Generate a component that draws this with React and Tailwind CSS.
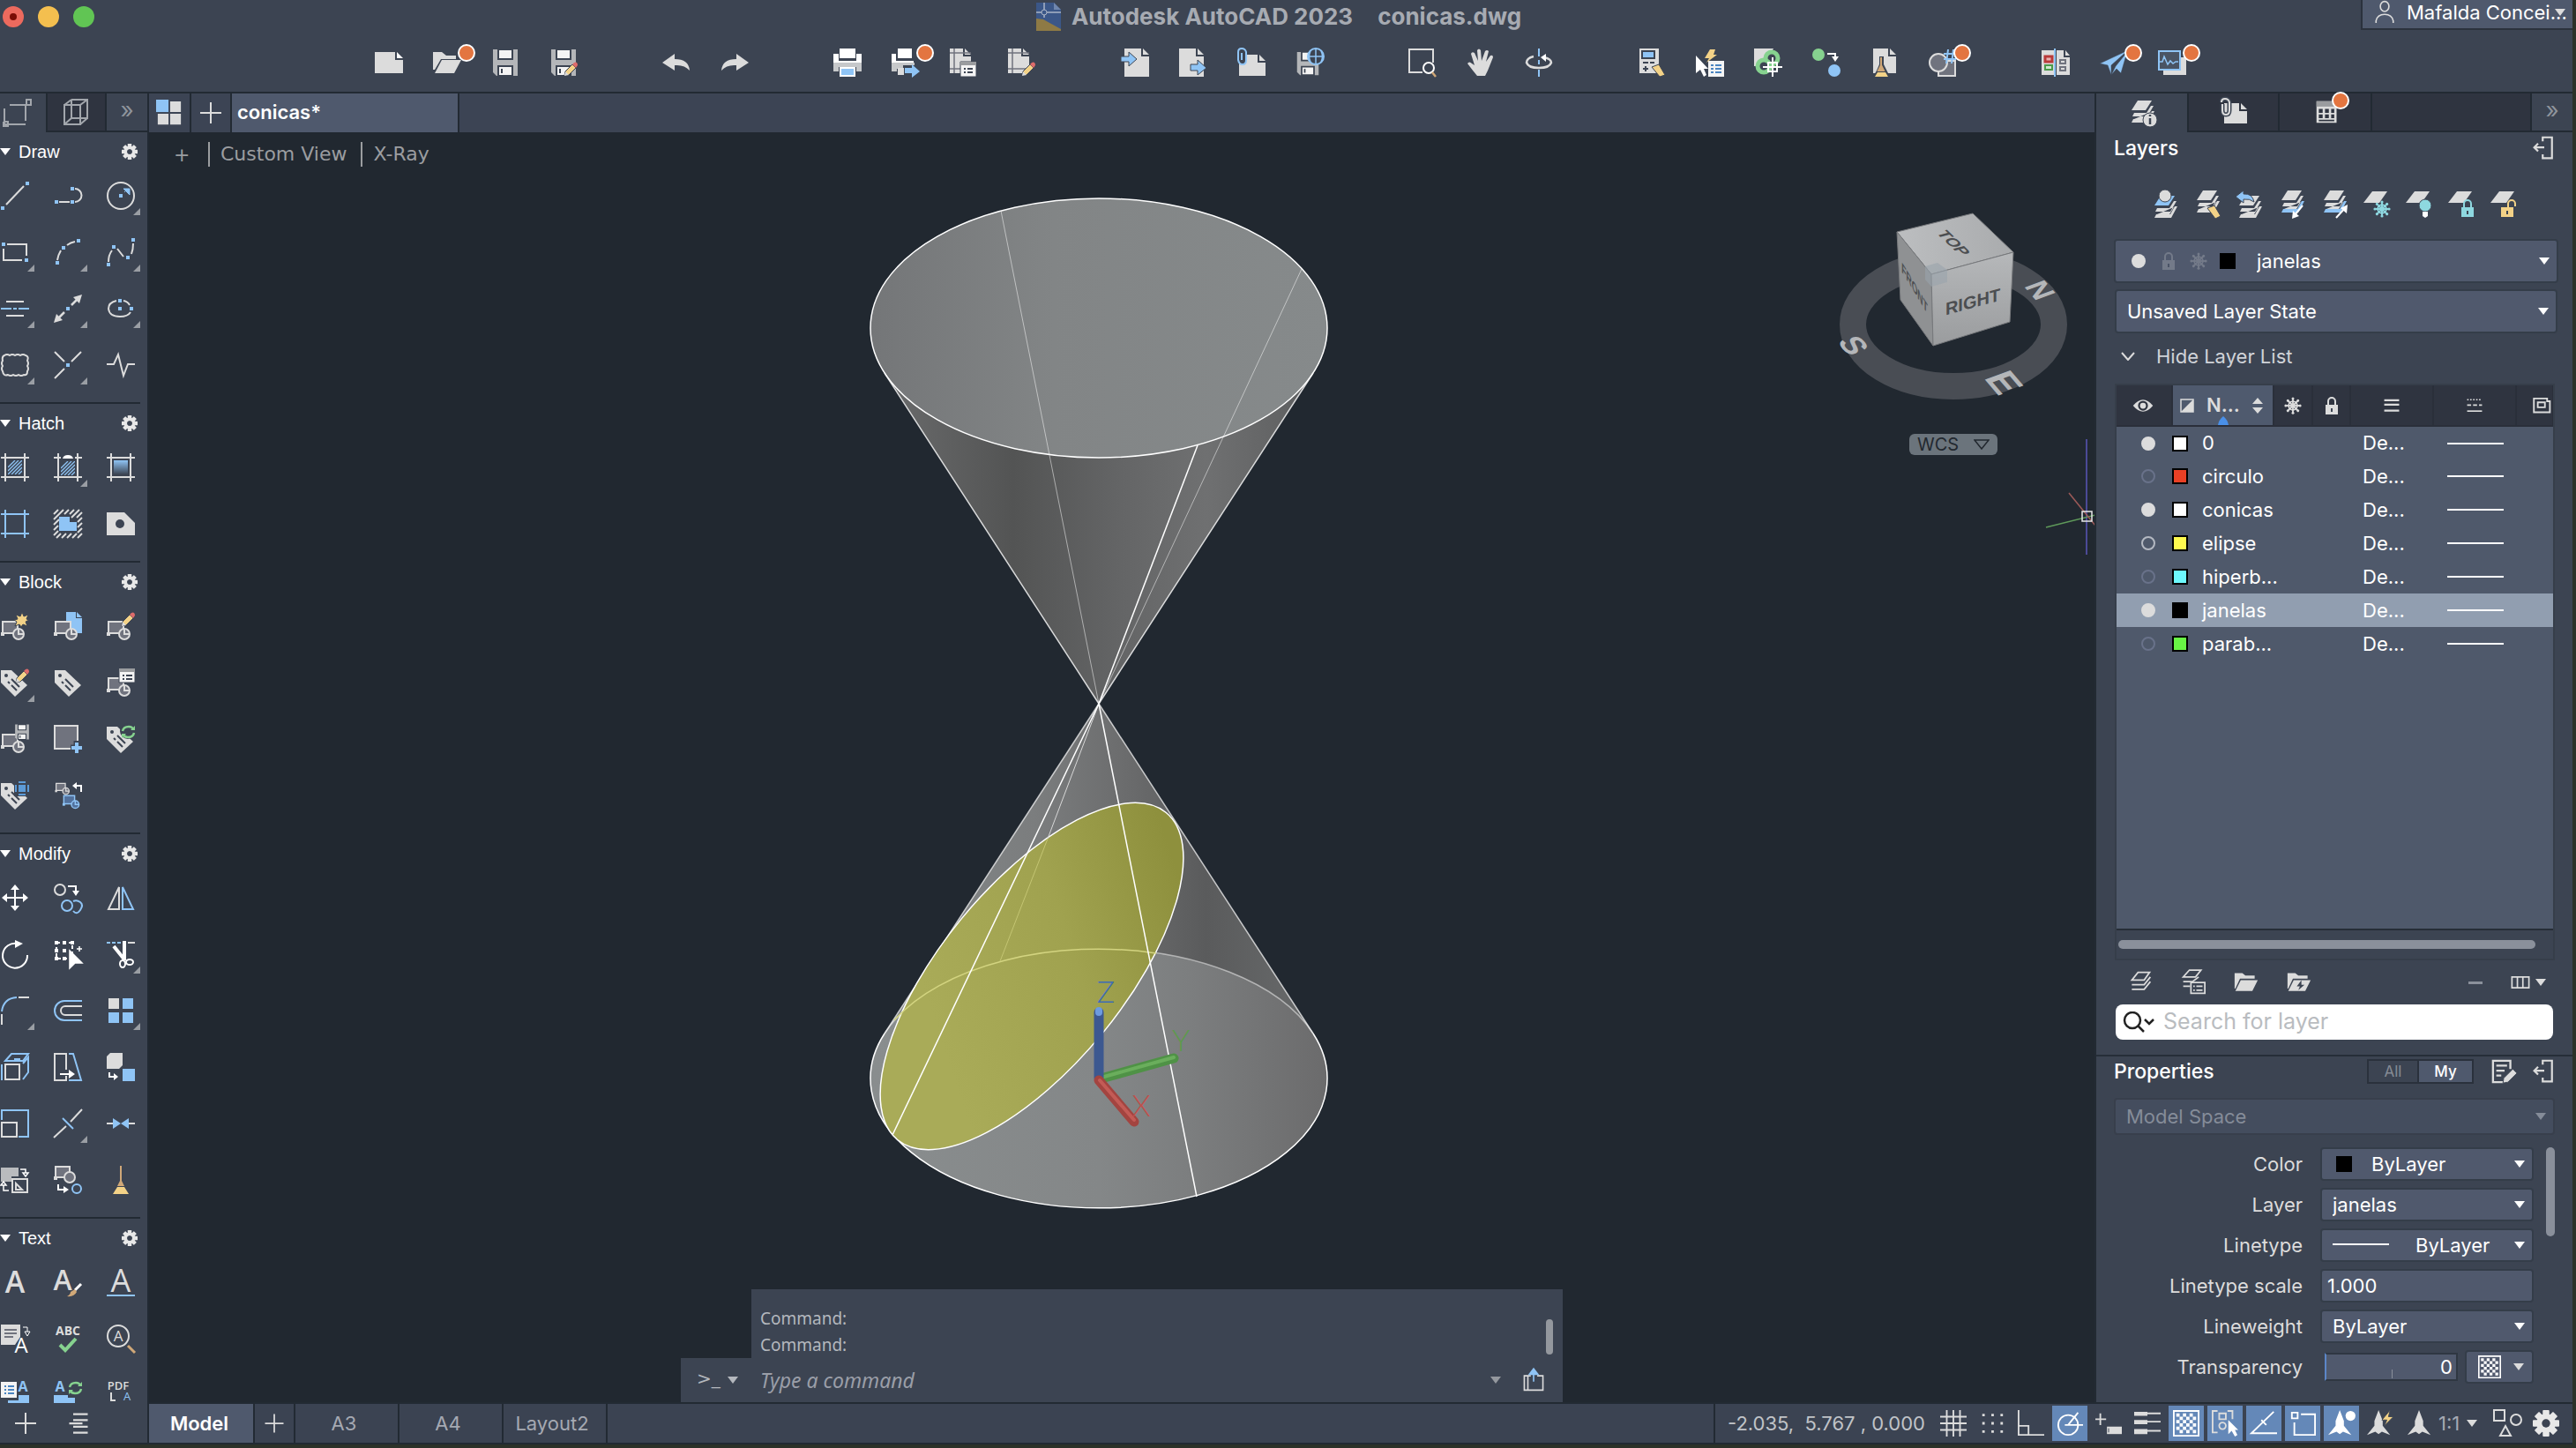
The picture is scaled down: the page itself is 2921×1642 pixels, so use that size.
import clsx from "clsx";

const W = "#dcdcdc";
const B = "#8fc4f5";
const Y = "#f3d287";
const G = "#86d28f";
const C = "#8ed8e0";
const K = "#3c4452";
const M = "#70737e";

/* ---------- shared icon parts ---------- */

const Dot = ({ x, y }) => <rect x={x - 2} y={y - 2} width="4" height="4" fill={B} />;

const Pencil = ({ x = 0, y = 0 }) => (
  <g transform={`translate(${x} ${y})`}>
    <path d="M1 16l1-5 8-8 4 4-8 8z" fill={Y} stroke={K} />
    <path d="M10 3l2-2q2-1 3 0t1 3l-2 3z" fill="#dd6b6b" />
    <path d="M1 16l1-5 4 4z" fill={W} />
  </g>
);

const BlockShape = ({ color = W, fill = M }) => (
  <g fill={fill} stroke={color} strokeWidth="2">
    <path d="M2 11h17v13H2z" />
    <circle cx="20" cy="25" r="6" />
    <path d="M20 19v6h6" fill="none" />
    <path d="M0 23h4v4H0z" fill={color} stroke="none" />
  </g>
);

const TagShape = () => (
  <>
    <path d="M0 2h12l18 17-14 13L0 16z" fill={W} />
    <circle cx="6" cy="8" r="2" fill={K} />
    <path d="M8 15l2 2M12 12l9 9M12 19l6 6" stroke={K} strokeWidth="2" />
  </>
);

const Page = ({ x = 6, y = 2, w = 22, h = 28 }) => (
  <path d={`M${x} ${y}h${w - 9}v9h9v${h - 9}h${-w}zM${x + w - 7} ${y}l7 7h-7z`} fill={W} />
);

const Floppy = () => (
  <>
    <path d="M2 1h28v30H6l-4-4z" fill="#b4b6b9" />
    <path d="M8 1h16v11H8zM8 20h16v11H8z" fill="#f4f4f4" stroke={K} strokeWidth="2" />
    <path d="M12 23v5" stroke={K} strokeWidth="2" />
  </>
);

const Frame = ({ color = W }) => (
  <path d="M0 5h32M0 27h32M5 0v32M27 0v32" stroke={color} strokeWidth="2" />
);

const Stack = ({ top = W, bottom = W, y = 0 }) => (
  <g transform={`translate(0 ${y})`}>
    <path d="M11 0h16l-7 11H4z" fill={top} />
    <path d="M26 6l-5 8H7l-2 4h17l7-12zM26 13l-5 8H7" fill={W} />
    <path d="M27 12l-5 9H6l-2 4h19l7-13z" fill={bottom} />
  </g>
);

const Sheet = () => <path d="M11 1h17l-9 13H1z" fill={W} />;

const Snow = ({ x = 16, y = 16, r = 9, color = C, width = 2 }) => (
  <g transform={`translate(${x} ${y})`} stroke={color} strokeWidth={width} fill="none">
    {[0, 45, 90, 135].map((a) => (
      <path key={a} d={`M0 ${-r}V${r}`} transform={`rotate(${a})`} />
    ))}
    <circle r={r * 0.6} />
    {[0, 45, 90, 135, 180, 225, 270, 315].map((a) => (
      <circle key={a} cy={-r} r={width * 0.8} fill={color} stroke="none" transform={`rotate(${a})`} />
    ))}
  </g>
);

const Lock = ({ x = 9, y = 4, color = W, open = false }) => (
  <g transform={`translate(${x} ${y})`}>
    <path d={open ? "M8 9V5a4 4 0 0 1 8 0v3" : "M3 9V5a4 4 0 0 1 8 0v4"} fill="none" stroke={color} strokeWidth="2" />
    <path d="M0 9h14v11H0z" fill={color} />
    <path d="M7 13v4" stroke={K} strokeWidth="2" />
  </g>
);

const Hash = () => <path d="M12 0L0 12M18 0L0 18M24 0L0 24M24 6L6 24M24 12L12 24M24 18l-6 6" stroke={B} strokeWidth="2" />;

const Refresh = ({ x = 15, y = 0 }) => (
  <g transform={`translate(${x} ${y})`} fill="none" stroke={G} strokeWidth="2.5">
    <path d="M2 7q1-5 7-5 4 0 5 3M15 9q-1 5-7 5-4 0-5-3" />
    <path d="M11 6h5V1zM6 10H1v5z" fill={G} stroke="none" />
  </g>
);

const ICONS = {
  /* draw */
  line: <><path d="M6 26L26 5" stroke={W} strokeWidth="2" /><Dot x={2} y={30} /><Dot x={30} y={2} /></>,
  polyline: <><path d="M6 23h12M24 8a7.500 7.500 0 0 1 0 15" stroke={W} strokeWidth="2" fill="none" /><Dot x={3} y={23} /><Dot x={21} y={23} /><Dot x={21} y={8} /></>,
  circle: <><circle cx="16" cy="16" r="15" stroke={W} strokeWidth="2" fill="none" /><Dot x={16} y={16} /><path d="M20 12l3-3M19 8h7v7z" stroke={B} fill={B} /></>,
  rect: <><path d="M7 7h22v13M24 25H3V12" stroke={W} strokeWidth="2" fill="none" /><Dot x={3} y={7} /><Dot x={29} y={25} /></>,
  arc: <><path d="M4 25q1-6 4-11M15 8q4-3 9-4" stroke={W} strokeWidth="2" fill="none" /><Dot x={4} y={28} /><Dot x={11} y={11} /><Dot x={28} y={3} /></>,
  spline: <><path d="M2 27q0-8 4-13M12 12l7 9M28 18q2-5 2-12" stroke={W} strokeWidth="2" fill="none" /><Dot x={2} y={30} /><Dot x={8} y={10} /><Dot x={24} y={22} /><Dot x={30} y={2} /></>,
  centerline: <><path d="M6 8h20M6 24h20" stroke={W} strokeWidth="2" /><path d="M0 16h12M14 16h4M20 16h12" stroke={B} strokeWidth="2" /></>,
  ray: <><path d="M20 12l7-7M12 20l-7 7" stroke={W} strokeWidth="2.500" /><path d="M32 0l-3 10-7-7zM0 32l3-10 7 7z" fill={W} /><Dot x={16} y={16} /></>,
  ellipse: <><path d="M11 7Q2 9 2 16q1 9 13 9 9 0 12-5M19 7q5 1 7 5" stroke={W} strokeWidth="2" fill="none" /><Dot x={15} y={7} /><Dot x={15} y={16} /><Dot x={28} y={16} /></>,
  cloud: <path d="M4 5q3-2 6 0 3-2 6 0 3-2 6 0 3-2 6 0 4 1 2 6 2 3 0 6 2 3 0 6 0 5-4 4-3 2-6 0-3 2-6 0-3 2-6 0-5 2-6-4-2-3 0-6-2-3 0-6-1-5 2-6z" stroke={W} strokeWidth="2" fill="none" />,
  cross: <><path d="M1 1l11 11M31 1L20 12M12 20L1 31" stroke={W} strokeWidth="2" /><Dot x={16} y={16} /></>,
  zigzag: <path d="M0 15h8l5-11 6 24 5-13h8" stroke={W} strokeWidth="2" fill="none" />,
  /* hatch */
  hatch: <><Frame /><svg x="8" y="8" width="16" height="16" viewBox="0 0 24 24"><Hash /></svg></>,
  hatchEdit: <><Frame /><svg x="8" y="9" width="16" height="16" viewBox="0 0 24 24"><Hash /></svg><path d="M8 3h16v4H8z" fill={K} /><path d="M10 6q1-4 6-4t6 4z" fill="#fff" /></>,
  gradient: <><defs><linearGradient id="hg" x2="0" y2="1"><stop stopColor={B} /><stop offset="1" stopColor={K} /></linearGradient></defs><Frame /><path d="M8 8h16v16H8z" fill="url(#hg)" /></>,
  boundary: <Frame color={B} />,
  region: <><path d="M0 5l5-5M0 11L11 0M0 17l6-6M0 23l5-5M0 29l5-5M3 32l5-5M9 32l5-5M15 32l5-5M21 32l5-5M27 32l5-5M12 5l5-5M18 5l5-5M20 9l9-9M26 9l6-6M27 14l5-5M27 20l5-5M27 26l5-5" stroke={W} strokeWidth="2" /><path d="M6 8h12v6h8v10H6z" fill={B} /></>,
  wipeout: <><path d="M0 3h20l12 12v14H0z" fill={W} /><circle cx="15" cy="16" r="5" fill={K} /></>,
  /* block */
  blockNew: <><BlockShape /><path d="M24 0l2 5 5-2-2 5 3 1-4 2 2 5-5-2-2 3-2-3-5 2 2-5-3-2 4-1-2-5 5 2z" fill={Y} stroke={K} /></>,
  blockInsert: <><path d="M14 0h11v7h7v17H14z" fill={B} /><path d="M26 0l6 6h-6z" fill={B} /><BlockShape /></>,
  blockEdit: <><BlockShape /><Pencil x={16} y={0} /></>,
  tagEdit: <><TagShape /><Pencil x={16} y={0} /></>,
  tag: <g transform="translate(1 0)"><TagShape /></g>,
  blockList: <><BlockShape /><path d="M14 0h18v16H14z" fill="#f4f4f4" stroke={K} /><path d="M14 0h18v4H14z" fill="#9a9c9f" /><path d="M18 8h2M22 8h7M18 12h2M22 12h7" stroke={K} strokeWidth="2" /></>,
  blockSave: <><BlockShape /><svg x="15" y="-1" width="18" height="18" viewBox="0 0 32 32"><Floppy /></svg></>,
  baseAdd: <><path d="M1 1h26v26H1z" fill={M} stroke={W} strokeWidth="2" /><path d="M26 18v14M19 26h14" stroke={K} strokeWidth="7" /><path d="M26 20v12M20 26h12" stroke={B} strokeWidth="4" /></>,
  tagSync: <><TagShape /><circle cx="24" cy="7" r="9" fill={K} /><Refresh x={16} y={0} /></>,
  tagField: <><TagShape /><path d="M15 0h17v17H15z" fill={K} /><path d="M20 4h8v8h-8zM20 0h8v2h-8zM20 14h8v2h-8zM16 4h2v8h-2zM30 4h2v8h-2z" fill="#5c9bd8" /></>,
  blockReplace: <><svg width="20" height="16" viewBox="0 7 28 26"><BlockShape /></svg><svg x="8" y="14" width="24" height="18" viewBox="0 8 28 25"><BlockShape color={B} fill="#52719c" /></svg><path d="M31 12V5h-7" stroke="#fff" strokeWidth="2" fill="none" /><path d="M26 1v8l-5-4z" fill="#fff" /></>,
  /* modify */
  move: <><path d="M16 5v22M5 16h22" stroke="#fff" strokeWidth="2" /><path d="M16 1l5 6H11zM16 31l5-6H11zM1 16l6-5v10zM31 16l-6-5v10z" fill="#fff" /></>,
  copy: <><circle cx="7" cy="7" r="6" stroke={W} strokeWidth="2" fill="none" /><path d="M16 3h9v6" stroke="#fff" strokeWidth="2" fill="none" /><path d="M21 8h8l-4 6z" fill="#fff" /><g stroke={B} strokeWidth="2" fill="none"><circle cx="15" cy="25" r="6" /><path d="M22 20q4-2 8 1t0 9-8 1" /></g></>,
  mirror: <><path d="M14 4v25H2z" stroke={W} strokeWidth="2" fill="none" /><path d="M18 4v25h12z" stroke={B} strokeWidth="2" fill="none" /></>,
  rotate: <><path d="M19 4A14 14 0 1 0 30 17" stroke="#fff" strokeWidth="2" fill="none" /><path d="M16 0l9 4-9 5z" fill="#fff" /></>,
  stretch: <><path d="M3 3h18v18H3z" stroke="#fff" strokeWidth="2" strokeDasharray="4 3" fill="none" /><path d="M1 1h4v4H1zM10 1h4v4h-4zM19 1h4v4h-4zM1 10h4v4H1zM1 19h4v4H1zM10 10h4v4h-4zM10 19h4v4h-4z" fill="#fff" /><path d="M18 12v20l6-6h8zM26 10h6M29 7v6" fill="#fff" stroke="#fff" strokeWidth="1.500" /></>,
  trim: <><path d="M0 3h4M6 3h4M12 3h4" stroke={B} strokeWidth="2" /><path d="M24 3h8" stroke={W} strokeWidth="2" /><path d="M8 7l12 15M20 1v22" stroke="#fff" strokeWidth="4" /><g stroke="#fff" strokeWidth="2" fill="none"><ellipse cx="18" cy="27" rx="3" ry="4" /><ellipse cx="26" cy="25" rx="4" ry="3" /></g></>,
  fillet: <><path d="M1 17Q3 2 18 1" stroke={B} strokeWidth="2" fill="none" /><path d="M20 1h12M1 20v12" stroke={W} strokeWidth="2" /></>,
  offset: <><path d="M32 5H12a11 11 0 0 0 0 22h20" stroke={B} strokeWidth="2" fill="none" /><path d="M32 11H13a5 5 0 0 0 0 10h19" stroke={W} strokeWidth="2" fill="none" /></>,
  array: <><path d="M2 2h12v12H2z" fill={W} /><path d="M18 2h12v12H18zM18 18h12v12H18zM2 18h12v12H2z" fill={B} /></>,
  extrude: <><path d="M5 13h16v17H5z" stroke={W} strokeWidth="2" fill="none" /><path d="M1 31V13M5 9l7-8h19l-6 8zM15 7h7M25 12l6-7v17l-6 8" stroke={B} strokeWidth="2" fill="none" /></>,
  taper: <><path d="M14 19V1H1v30h13v-5" stroke={W} strokeWidth="2" fill="none" /><path d="M17 1h5l9 30H17" stroke={B} strokeWidth="2" fill="none" /><path d="M7 23h10v-4l7 5-7 5v-4H7z" fill="#fff" /></>,
  flatten: <><path d="M0 4l4-4h14v14l-4 4H0z" fill={W} /><path d="M3 22v5h5" stroke="#fff" strokeWidth="2" fill="none" /><path d="M8 23l5 4-5 4z" fill="#fff" /><path d="M18 18h14v14H18z" fill={B} /></>,
  scale: <><path d="M1 12V1h30v30H20" stroke={B} strokeWidth="2" fill="none" /><path d="M1 15h17v16H1z" stroke={W} strokeWidth="2" fill="none" /></>,
  breakAt: <><path d="M32 0L19 14M14 19L0 32" stroke={W} strokeWidth="2" /><path d="M10 10l12 12" stroke={B} strokeWidth="2" /></>,
  join: <><path d="M0 16h8M24 16h8" stroke={W} strokeWidth="2" /><path d="M7 10l9 6-9 6zM25 10l-9 6 9 6z" fill={B} /></>,
  swap: <><path d="M0 2h20v10h-8v6H0z" fill="#b9bbbe" /><path d="M13 15h17v15H13zM17 20v7h7z" stroke={W} strokeWidth="2" fill="none" /><path d="M22 4h6v4M25 8h6l-3 4zM3 22v6h6M0 22h6l-3-4z" stroke="#fff" strokeWidth="1.500" fill="none" /></>,
  changeSpace: <><path d="M2 1h16v12H2z" fill={M} stroke={W} strokeWidth="2" /><circle cx="18" cy="13" r="6" fill={M} stroke={W} strokeWidth="2" /><path d="M0 12h4v4H0z" fill={W} /><path d="M5 21v6h6" stroke="#fff" strokeWidth="2" fill="none" /><path d="M11 23l6 4-6 4z" fill="#fff" /><circle cx="26" cy="26" r="5" stroke={B} strokeWidth="2" fill="none" /></>,
  purge: <><path d="M16 0v17" stroke="#d0a878" strokeWidth="2" /><path d="M15 17h2l3 6h-8z" fill="#d0a878" /><path d="M12 24h8l5 8H7z" fill={Y} /></>,
  /* text */
  mtext: <text x="16" y="28" textAnchor="middle" className="font-['Open_Sans'] text-[34px] font-semibold" fill={W}>A</text>,
  textStyle: <><text x="10" y="25" textAnchor="middle" className="font-['Open_Sans'] text-[32px] font-semibold" fill={W}>A</text><path d="M31 18l-7 7" stroke="#fff" strokeWidth="3" /><path d="M24 24l2 3q-3 6-11 5 4-2 4-5z" fill="#d0a878" /></>,
  textSingle: <><text x="16" y="27" textAnchor="middle" className="font-['Open_Sans'] text-[36px]" fill={W}>A</text><path d="M0 31h32" stroke={B} strokeWidth="2" /></>,
  textConvert: <><path d="M0 0h22v14l-6 9H0z" fill={W} /><path d="M4 6h14M4 10h14M4 14h10" stroke={M} strokeWidth="2" /><text x="23" y="32" textAnchor="middle" className="font-['Open_Sans'] text-[24px]" fill="#fff">A</text><path d="M25 3h5v5M27 8h6l-3 5z" stroke="#fff" fill="none" /></>,
  spell: <><text x="16" y="12" textAnchor="middle" className="font-['Open_Sans'] text-[14px] font-bold" fill={W}>ABC</text><path d="M7 23l6 6 12-13" stroke={G} strokeWidth="4" fill="none" /></>,
  textFind: <><circle cx="13" cy="13" r="12" stroke={W} strokeWidth="2" fill="none" /><text x="13" y="19" textAnchor="middle" className="font-['Open_Sans'] text-[17px]" fill={W}>A</text><path d="M24 24l8 8" stroke="#d0a878" strokeWidth="3" /></>,
  textField: <><path d="M0 1h18v18H0z" fill="#f4f4f4" /><path d="M4 6h2M8 6h7M4 10h2M8 10h7M4 14h2M8 14h7" stroke="#4a84c0" strokeWidth="2" /><text x="25" y="12" textAnchor="middle" className="font-['Open_Sans'] text-[16px] font-bold" fill={B}>A</text><path d="M20 16h12v9H8v-3h12z" fill={B} /></>,
  textUpdate: <><text x="7" y="12" textAnchor="middle" className="font-['Open_Sans'] text-[16px] font-bold" fill={B}>A</text><path d="M0 16h16v3h8v6H0z" fill={B} /><Refresh x={16} y={0} /></>,
  pdfText: <><text x="13" y="10" textAnchor="middle" className="font-['Open_Sans'] text-[13px] font-semibold" fill={W}>PDF</text><path d="M5 13v9h5" stroke={W} strokeWidth="2" fill="none" /><text x="23" y="22" textAnchor="middle" className="font-['Open_Sans'] text-[13px]" fill={B}>A</text></>,
  /* top bar */
  newFile: <><path d="M0 4h23v9h9v15H0z" fill={W} /><path d="M25 4l7 7h-7z" fill="#fff" /></>,
  open: <><path d="M0 4h10l5 4h11v4H9L2 24H0z" fill={W} /><path d="M10 13h22l-8 15H2z" fill={W} /></>,
  save: <Floppy />,
  saveAs: <><Floppy /><Pencil x={16} y={15} /></>,
  undo: <path d="M0 16L14 6v6q16 0 17 13-6-7-17-6v6z" fill={W} />,
  redo: <path d="M32 16L18 6v6Q2 12 1 25q6-7 17-6v6z" fill={W} />,
  print: <><path d="M0 6h6v8h20V6h6v10H0z" fill="#fff" /><path d="M7 0h18v11H7z" fill="#fff" /><path d="M0 16h32v10h-6v-5H6v5H0z" fill="#c6c8ca" /><path d="M8 22h16v9H8z" fill={B} stroke="#fff" strokeWidth="2" /></>,
  batch: <><path d="M0 6h5v8h20v2H0z" fill="#fff" /><path d="M7 0h16v11H7z" fill="#fff" /><path d="M0 16h26v3H13v4H6v3H0z" fill="#c6c8ca" /><path d="M7 22h7v8H7z" fill={W} /><path d="M15 22h8v-4l9 8-9 7v-5h-8z" fill={B} /></>,
  pageSetup: <><Page x={0} y={0} w={24} h={28} /><path d="M0 5h24M0 23h24M5 0v28" stroke={M} strokeWidth="1.500" /><path d="M12 15h18v17H12z" fill="#f4f4f4" stroke={K} /><path d="M12 15h18v4H12z" fill="#9a9c9f" /><path d="M16 23h2M20 23h6M16 27h2M20 27h6" stroke={K} strokeWidth="2" /></>,
  pageEdit: <><Page x={0} y={0} w={24} h={28} /><path d="M0 5h24M0 23h24M5 0v28" stroke={M} strokeWidth="1.500" /><Pencil x={15} y={15} /></>,
  importFile: <><Page x={4} y={0} w={28} h={32} /><path d="M0 9h9V4l9 8-9 8v-5H0z" fill={B} stroke={K} /></>,
  exportFile: <><Page x={0} y={0} w={28} h={32} /><path d="M13 18h8v-5l10 9-10 8v-5h-8z" fill={B} stroke={K} /></>,
  attach: <><Page x={2} y={7} w={30} h={24} /><path d="M1 4q0-4 4-4t5 4v9q0 5-4 5t-5-5z" fill={K} stroke={B} strokeWidth="2" /><path d="M5 5v8" stroke={B} strokeWidth="2" /></>,
  saveWeb: <><svg y="3" width="28" height="28" viewBox="0 0 32 32"><Floppy /></svg><circle cx="23" cy="9" r="9" fill={K} stroke={B} strokeWidth="2" /><path d="M14 9h18M23 0v18M17 3q-3 6 0 12M29 3q3 6 0 12" stroke={B} strokeWidth="1.500" fill="none" /></>,
  zoomWin: <><path d="M16 27H1V1h27v15" stroke={W} strokeWidth="2" fill="none" /><circle cx="23" cy="22" r="6" stroke="#fff" strokeWidth="2" fill={K} /><path d="M27 27l4 5" stroke="#d0a878" strokeWidth="2.500" /></>,
  hand: <path d="M12 31q-5-6-11-14 2-3 5 0l3 2L5 6q1-3 4-1l4 9L12 2q2-3 4 0l1 12 4-11q2-2 4 0l-3 12 5-7q3-1 3 2l-6 15-3 6z" fill={W} />,
  orbit: <><path d="M16 0v9M16 13v5M16 24v8" stroke={B} strokeWidth="2" /><path d="M10 9Q2 11 2 16q2 6 14 6t14-6q0-4-8-6" stroke={W} strokeWidth="2.500" fill="none" /><path d="M24 6v9l-6-5z" fill="#fff" /></>,
  calc: <g transform="translate(2 0)"><path d="M0 0h22v28H0z" fill={W} /><path d="M3 3h14v8H3z" fill={B} stroke={K} strokeWidth="2" /><path d="M4 16h6M12 16h5M4 23h6M7 20v6" stroke={K} strokeWidth="2" /><path d="M14 21l8-3 7 12-6 2z" fill={Y} stroke={K} /></g>,
  quickSelect: <><path d="M18 1h-6l-6 10h5L8 16l12-9h-4z" fill={Y} transform="translate(4 0)" /><path d="M0 8v20l5-4 4 8 3-2-3-7h5z" fill="#fff" /><path d="M14 14h18v18H14z" fill="#f4f4f4" /><path d="M17 19h3M22 19h7M17 23h3M22 23h7M17 27h3M22 27h7" stroke="#4a84c0" strokeWidth="2" /></>,
  countAdd: <><path d="M0 0h22L12 20H0z" fill={W} /><circle cx="20" cy="11" r="7" stroke={G} strokeWidth="5" fill={K} /><circle cx="11" cy="20" r="7" stroke={G} strokeWidth="5" fill={K} /><path d="M21 10v22M10 21h22M16 16h10v10H16z" stroke="#fff" strokeWidth="2" fill="none" /></>,
  match: <><circle cx="7" cy="7" r="7" fill={G} /><circle cx="25" cy="25" r="7" fill={B} /><path d="M17 6h9v4" stroke="#fff" strokeWidth="2" fill="none" /><path d="M22 9h8l-4 6z" fill="#fff" /></>,
  purgePage: <><Page x={3} y={0} w={26} h={28} /><path d="M10 9h5v9l4 8 3 6H3l4-7 3-7z" fill={K} /><path d="M12 10v9l3 6H9l3-6" stroke="#d0a878" strokeWidth="2" fill="#d0a878" /><path d="M8 27h9l3 5H5z" fill={Y} /></>,
  count: <><path d="M11 14h19v17H11z" fill={M} stroke={W} strokeWidth="2" /><circle cx="11" cy="16" r="10" fill={M} stroke={W} strokeWidth="2" /><path d="M17 6h14M17 12h14M22 1l-2 16M28 1l-2 16" stroke={B} strokeWidth="2" /></>,
  compare: <><path d="M0 2h14v28H0zM17 2h8v8h7v20H17zM27 2l5 6h-5z" fill={W} /><path d="M4 9h8v6H4z" fill="#e8b0b0" stroke="#b83a3a" strokeWidth="3" /><path d="M4 19h8v5H4z" fill="#cfe8cf" stroke="#4a9a4a" strokeWidth="2" /><path d="M21 13h6v4h-6zM21 21h6v4h-6z" stroke={M} strokeWidth="2" fill="none" /><path d="M15 0v32" stroke={B} strokeWidth="2" /></>,
  plane: <path d="M0 17L32 2 13 19v11l6-7 5 5L31 4 18 20 13 30 9 19z" fill={B} stroke={K} strokeWidth="0.500" />,
  monitor: <><path d="M6 10h26v20H6z" fill={W} /><path d="M1 3h24v21H1z" fill="#4a5464" stroke={B} strokeWidth="2" /><path d="M2 15h3l2-6 4 9 3-4 3 3 3-2h3" stroke={B} strokeWidth="1.500" fill="none" /></>,
  /* layers */
  layMake: <><g transform="translate(0 6)"><Stack top={B} /></g><circle cx="16" cy="6" r="7" fill={W} stroke={K} /></>,
  layMatch: <><Stack y={0} /><path d="M16 20l8-3 7 12-6 3z" fill={Y} stroke={K} /></>,
  layPrev: <><Stack y={6} /><path d="M0 7l9-7v4q10-1 12 9-5-4-12-3v4z" fill={B} stroke={K} /></>,
  layIso: <><Stack y={0} bottom={B} /><path d="M28 17L19 28" stroke="#fff" strokeWidth="2" /><path d="M16 32l1-9 7 6z" fill="#fff" /></>,
  layUniso: <><Stack y={0} bottom={B} /><path d="M18 31l10-11" stroke="#fff" strokeWidth="2" /><path d="M31 16l-1 10-7-6z" fill="#fff" /></>,
  layFreeze: <><Sheet /><Snow x={22} y={21} r={8} /></>,
  layOff: <><Sheet /><circle cx="23" cy="17" r="7" fill={C} stroke={K} /><path d="M20 24h6v5l-3 2-3-2z" fill="#fff" /></>,
  layLock: <><Sheet /><path d="M15 14h17v17H15z" fill={K} /><Lock x={16} y={10} color={C} /></>,
  layUnlock: <><Sheet /><Lock x={13} y={10} color={Y} open /></>,
  layInfo: <><Stack y={2} /><circle cx="25" cy="24" r="8" fill={W} stroke={K} /><path d="M25 22v7M25 18v2" stroke={K} strokeWidth="2.500" /></>,
  attachTab: <><Page x={5} y={6} w={26} h={23} /><path d="M2 5q0-4 4-4t5 4v9q0 5-4 5t-4-5V7" fill="none" stroke={K} strokeWidth="5" /><path d="M2 5q0-4 4-4t5 4v9q0 5-4 5t-4-5V7" fill="none" stroke={W} strokeWidth="2" /></>,
  toolTab: <><path d="M2 2h26v28H2z" fill={W} /><path d="M2 2h26v7H2z" fill="#9a9c9f" /><path d="M5 12h5v5H5zM13 12h5v5h-5zM21 12h4v5h-4zM5 19h5v5H5zM13 19h5v5h-5zM21 19h4v5h-4zM5 26h20v2H5z" fill="#2f3440" /></>,
  pin: <path d="M14 7V2h12v27H14v-5M3 15h13M8 10l-5 5 5 5" stroke={W} strokeWidth="2.500" fill="none" />,
  layNew: <path d="M13 3h15l-7 10H5zM5 19h16l8-10M5 25h16l8-10" stroke={W} strokeWidth="2" fill="none" />,
  layFilter: <><path d="M11 0h15l-7 9H3zM3 15h12l8-6M3 21h9" stroke={W} strokeWidth="2" fill="none" /><path d="M13 16h18v14H13z" fill={K} stroke={W} strokeWidth="2" /><path d="M16 21h2M20 21h8M16 26h2M20 26h8" stroke={W} strokeWidth="2" /></>,
  folder: <><path d="M1 4h10l4 3h12v4H8L2 24H1z" fill={W} /><path d="M9 13h22l-7 14H2z" fill={W} /></>,
  folderFlash: <><path d="M1 4h10l4 3h12v4H8L2 24H1z" fill={W} /><path d="M9 13h22l-7 14H2z" fill={W} /><path d="M19 13l-6 8h4l-2 5 8-7h-4z" fill={K} /></>,
  columns: <path d="M2 7h28v18H2zM11 7v18M20 7v18" stroke={W} strokeWidth="2.500" fill="none" />,
  noteEdit: <><path d="M14 29H2V3h21v10M6 9h13M6 15h10M6 21h6" stroke={W} strokeWidth="2.500" fill="none" /><path d="M14 30l1-6L26 13l5 5-11 11z" fill={W} stroke={K} /></>,
  /* status */
  grid: <path d="M8 0v32M16 0v32M24 0v32M0 8h32M0 16h32M0 24h32" stroke={W} strokeWidth="2" />,
  snap: <path d="M4 6h26M4 16h26M4 26h26" stroke={W} strokeWidth="3" strokeDasharray="3 8" />,
  ortho: <path d="M1 0v30h31M1 19h12v11" stroke={W} strokeWidth="2" fill="none" />,
  polar: <><circle cx="14" cy="18" r="12" stroke="#fff" strokeWidth="2" fill="none" /><path d="M14 18L26 3M10 18h22" stroke="#fff" strokeWidth="2" /></>,
  dyn: <><path d="M6 4v14M0 11h13" stroke={W} strokeWidth="2" /><path d="M14 20h18v9H14z" fill={W} /><path d="M16 22v5" stroke={K} /></>,
  weight: <><path d="M0 2h16v5H0zM0 12h16v5H0zM0 23h16v6H0z" fill={W} /><path d="M16 4h16M16 14h16M16 25h16" stroke={W} strokeWidth="2" /></>,
  checker: <><path d="M1 1h30v30H1z" stroke="#fff" strokeWidth="2" fill="none" /><path d="M4 6h24M4 14h24M4 22h24" stroke="#fff" strokeWidth="4" strokeDasharray="4 4" /><path d="M8 10h20M8 18h20M8 26h20" stroke="#fff" strokeWidth="4" strokeDasharray="4 4" /></>,
  cycle: <><path d="M7 1H1v26h6M19 1h6v10" stroke={W} strokeWidth="2" fill="none" /><path d="M9 4h8v7H9z" stroke={W} strokeWidth="2" fill="none" /><circle cx="13" cy="19" r="4" stroke={W} strokeWidth="2" fill="none" /><path d="M20 12v17l4-4 4 7 3-2-3-6h4z" fill="#fff" /></>,
  otrack: <path d="M32 28H1L28 2M13 12l6 6" stroke="#fff" strokeWidth="2" fill="none" />,
  osnap: <><path d="M3 3h7v7H3zM14 5h17v25H6V15" stroke="#fff" strokeWidth="2" fill="none" /></>,
  annoVis: <><path d="M14 0l5 13v6l9 11-10-4-4 3-4-3-10 4 9-11v-6z" fill="#fff" /><circle cx="27" cy="7" r="6" fill="#fff" /></>,
  annoAuto: <><path d="M14 0l5 13v6l9 11-10-4-4 3-4-3-10 4 9-11v-6z" fill={W} /><path d="M28 0L18 12h6l-3 7 11-11h-6z" fill={Y} stroke={K} /></>,
  anno: <path d="M16 0l5 13v6l9 11-10-4-4 3-4-3L2 30l9-11v-6z" fill={W} />,
  shapes: <><path d="M1 1h12v12H1zM14 19l6 11H8z" stroke={W} strokeWidth="2" fill="none" /><circle cx="26" cy="12" r="6" stroke={W} strokeWidth="2" fill="none" /></>,
  model2d: <><path d="M1 11v18h24M7 7h18v18" stroke="#a2a6ac" strokeWidth="2" fill="none" /><path d="M27 1h4v6h-5V1zM1 26h4v5H0v-5" stroke="#a2a6ac" strokeWidth="2" fill="none" /></>,
  model3d: <path d="M2 8h18v22H2zM10 2h18v21H10M2 8l8-6M20 8l8-6M20 30l8-7M2 30l8-7V2" stroke="#a2a6ac" strokeWidth="2" fill="none" />,
  tiles: <><path d="M0 0h15v15H0z" fill={B} /><path d="M17 2h13v13H17zM2 17h13v13H2zM17 17h13v13H17z" fill={W} /></>,
  plus: <path d="M16 4v24M4 16h24" stroke={W} strokeWidth="2" />,
  list: <path d="M8 2h22M8 11h22M8 21h22M8 30h22M2 16h20" stroke={W} strokeWidth="3" />,
  share: <><path d="M12 10H3v20h26V10h-8M8 10v20" stroke={W} strokeWidth="2" fill="none" /><path d="M16 18V4M10 8l6-8 6 8z" stroke={B} strokeWidth="2" fill={B} /></>,
  user: <path d="M16 2a6 7 0 1 1 0 14a6 7 0 1 1 0-14M4 32v-3q2-9 12-9t12 9v3" stroke={W} strokeWidth="2" fill="none" />,
  eye: <><path d="M1 16Q16-2 31 16 16 34 1 16z" fill={W} /><circle cx="16" cy="16" r="6" fill="none" stroke="#2f3440" strokeWidth="3" /></>,
  contrast: <><path d="M2 2h28v28H2z" stroke={W} strokeWidth="3" fill="none" /><path d="M30 2v28H2z" fill={W} /></>,
  snow: <Snow r={13} color={W} width={3} />,
  lock: <Lock x={9} y={6} />,
  weightCol: <path d="M1 5h30M1 14h30M1 26h30" stroke={W} strokeWidth="4" />,
  typeCol: <><path d="M1 4h30" stroke={W} strokeWidth="3" strokeDasharray="3 3" /><path d="M1 15h30" stroke={W} strokeWidth="3" strokeDasharray="8 4" /><path d="M1 27h30" stroke={W} strokeWidth="3" /></>,
  vpCol: <path d="M2 3h24v5h5v20H2zM9 10h13v9H9z" stroke={W} strokeWidth="3" fill="none" />,
};

function Icon({ name, className = "size-8" }) {
  return (
    <svg viewBox="0 0 32 32" className={clsx("block shrink-0 overflow-visible", className)} aria-hidden="true">
      {ICONS[name]}
    </svg>
  );
}

function Gear({ className }) {
  return (
    <svg viewBox="-16 -16 32 32" className={clsx("block shrink-0", className)} aria-hidden="true">
      {[0, 45, 90, 135].map((a) => (
        <rect key={a} x="-4" y="-16" width="8" height="32" rx="1" fill="#e8e8e8" transform={`rotate(${a})`} />
      ))}
      <circle r="8" fill={K} stroke="#e8e8e8" strokeWidth="7" />
      <circle r="5" fill={K} />
    </svg>
  );
}

const Caret = ({ className = "text-[#dcdcdc]" }) => (
  <svg viewBox="0 0 12 8" className={clsx("block h-2 w-3 shrink-0", className)} aria-hidden="true">
    <path d="M0 0h12L6 8z" fill="currentColor" />
  </svg>
);

const Badge = ({ className }) => (
  <span className={clsx("absolute size-5 rounded-full border-2 border-white bg-[#e37540]", className)} />
);

/* ---------- title + main toolbar ---------- */

const TOOLBAR = [
  ["newFile", "open!", "save", "saveAs"],
  ["undo", "redo"],
  ["print", "batch!", "pageSetup", "pageEdit"],
  ["importFile", "exportFile", "attach", "saveWeb"],
  ["zoomWin", "hand", "orbit"],
  ["calc", "quickSelect", "countAdd", "match", "purgePage", "count!"],
  ["compare", "plane!", "monitor!"],
];

function Header() {
  return (
    <header className="shrink-0 border-b-2 border-[#222a33]">
      <div className="flex h-[38px] items-center">
        <div className="flex flex-1 gap-4 pl-[3px]">
          <span className="flex size-6 items-center justify-center rounded-full bg-[#ec6a5e]">
            <span className="size-2 rounded-full bg-[#7a0d05]" />
          </span>
          <span className="size-6 rounded-full bg-[#f4bf4f]" />
          <span className="size-6 rounded-full bg-[#61c554]" />
        </div>
        <h1 className="flex items-center pr-5 text-[26px] leading-8 font-bold text-[#a7abb2]">
          <svg viewBox="0 0 28 32" className="mr-3 h-8 w-7" aria-hidden="true">
            <path d="M0 0h20l8 8v22H0z" fill="#3b5788" />
            <path d="M20 0v8h8z" fill="#6f86ad" />
            <path d="M0 18l8 1 20 11v2H0z" fill="#8e7a45" />
            <path d="M9 0v17M0 11h28" stroke="#a9b4c6" strokeWidth="1.500" />
            <circle cx="9" cy="11" r="3" fill="#3b5788" stroke="#a9b4c6" />
          </svg>
          <span>Autodesk AutoCAD 2023</span>
          <span className="ml-7">conicas.dwg</span>
        </h1>
        <div className="flex flex-1 justify-end self-start">
          <button type="button" className="relative flex h-[34px] w-[240px] items-start overflow-hidden border-b-2 border-l-2 border-[#2b323d] bg-[#4f596d] pl-3 text-[22px] leading-7 whitespace-nowrap text-white">
            <Icon name="user" className="mr-3 size-[26px]" />
            <span>Mafalda Concei...</span>
            <Caret className="absolute top-[10px] right-2 text-[#dcdcdc]" />
          </button>
        </div>
      </div>
      <nav className="flex h-[66px] gap-[62px] pl-[408px]">
        {TOOLBAR.map((group) => (
          <div key={group[0]} className="flex">
            {group.map((id) => {
              const name = id.replace("!", "");
              return (
                <button key={id} type="button" aria-label={name} className="relative flex w-[66px] items-center justify-center">
                  <Icon name={name} />
                  {id.endsWith("!") && <Badge className="top-3 left-[45px]" />}
                </button>
              );
            })}
          </div>
        ))}
      </nav>
    </header>
  );
}

/* ---------- left tool palette ---------- */

const SECTIONS = [
  { title: "Draw", tools: ["line", "polyline", "circle+", "rect+", "arc+", "spline+", "centerline+", "ray+", "ellipse+", "cloud+", "cross+", "zigzag"] },
  { title: "Hatch", tools: ["hatch", "hatchEdit+", "gradient", "boundary", "region", "wipeout"] },
  { title: "Block", tools: ["blockNew", "blockInsert", "blockEdit", "tagEdit+", "tag", "blockList", "blockSave", "baseAdd", "tagSync", "tagField", "blockReplace"] },
  { title: "Modify", tools: ["move", "copy", "mirror", "rotate", "stretch", "trim+", "fillet+", "offset", "array+", "extrude", "taper", "flatten", "scale", "breakAt+", "join", "swap", "changeSpace", "purge"] },
  { title: "Text", tools: ["mtext", "textStyle", "textSingle", "textConvert", "spell", "textFind", "textField", "textUpdate", "pdfText"] },
];

function ToolPalette() {
  return (
    <aside className="flex w-[169px] shrink-0 flex-col border-r-2 border-[#222a33]">
      <div className="flex h-11 shrink-0">
        <button type="button" aria-label="2D drafting" className="flex flex-1 items-center pl-1">
          <Icon name="model2d" />
        </button>
        <button type="button" aria-label="3D modeling" className="flex w-[69px] items-center justify-center border-x-2 border-b-2 border-[#222a33] bg-[#2f3440]">
          <Icon name="model3d" />
        </button>
        <button type="button" className="w-[46px] border-b-2 border-[#222a33] pb-1 text-[26px] leading-8 text-[#8f949c]">»</button>
      </div>
      <div className="min-h-0 flex-1 overflow-hidden font-['Liberation_Sans',sans-serif]">
        {SECTIONS.map(({ title, tools }) => (
          <section key={title}>
            <div className="flex h-10 items-center pt-1 pr-[11px]">
              <Caret className="text-white" />
              <h2 className="ml-[9px] flex-1 text-[20px] leading-6 text-white">{title}</h2>
              <Gear className="size-[18px]" />
            </div>
            <div className="grid grid-cols-[47px_60px_60px]">
              {tools.map((id) => {
                const name = id.replace("+", "");
                return (
                  <button key={id} type="button" aria-label={name} className="relative flex h-16 items-center justify-end pr-[14px]">
                    <Icon name={name} />
                    {id.endsWith("+") && (
                      <svg viewBox="0 0 8 8" className="absolute right-2 bottom-[10px] size-2" aria-hidden="true">
                        <path d="M8 0v8H0z" fill="#9a9ea4" />
                      </svg>
                    )}
                  </button>
                );
              })}
            </div>
            <div className="mt-[10px] mr-2 h-[2px] bg-[#222a33]" />
          </section>
        ))}
      </div>
      <div className="flex h-[46px] shrink-0 items-center gap-8 border-b-2 border-[#222a33] pl-[13px]">
        <button type="button" aria-label="Add tool set"><Icon name="plus" /></button>
        <button type="button" aria-label="Tool set list"><Icon name="list" className="size-6" /></button>
      </div>
    </aside>
  );
}

/* ---------- drawing area ---------- */

function Drawing() {
  return (
    <svg viewBox="169 150 2206 1440" preserveAspectRatio="xMidYMid slice" className="absolute inset-0 size-full" aria-label="Double cone cut by an oblique plane">
      <defs>
        <linearGradient id="disc" x1="0" x2="1">
          <stop stopColor="#898d8e" />
          <stop offset="0.500" stopColor="#848788" />
          <stop offset="0.700" stopColor="#7c7e7f" />
          <stop offset="1" stopColor="#6b6b6c" />
        </linearGradient>
        <linearGradient id="discTop" x1="0" x2="1">
          <stop stopColor="#747678" />
          <stop offset="0.400" stopColor="#828586" />
          <stop offset="1" stopColor="#868a8b" />
        </linearGradient>
        <linearGradient id="bodyTop" x1="0" x2="1">
          <stop stopColor="#6a6b6c" />
          <stop offset="0.300" stopColor="#535454" />
          <stop offset="0.550" stopColor="#646566" />
          <stop offset="0.750" stopColor="#6f7071" />
          <stop offset="1" stopColor="#5d5e5f" />
        </linearGradient>
        <linearGradient id="bodyLow" x1="0" x2="1">
          <stop stopColor="#85898a" />
          <stop offset="0.350" stopColor="#7b7d7e" />
          <stop offset="0.550" stopColor="#6c6d6e" />
          <stop offset="0.750" stopColor="#5a5b5c" />
          <stop offset="1" stopColor="#686a6b" />
        </linearGradient>
        <linearGradient id="cut" gradientUnits="userSpaceOnUse" x1="-77" y1="-105" x2="190" y2="63">
          <stop stopColor="#a9ab58" />
          <stop offset="0.550" stopColor="#a0a24f" />
          <stop offset="1" stopColor="#8e903d" />
        </linearGradient>
        <linearGradient id="cubeTop" x1="0" x2="1"><stop stopColor="#bcbec0" /><stop offset="1" stopColor="#a9abad" /></linearGradient>
        <linearGradient id="cubeSide" x2="0" y2="1"><stop stopColor="#b6b8ba" /><stop offset="1" stopColor="#9a9c9e" /></linearGradient>
      </defs>

      {/* upper nappe */}
      <path d="M1003 423L1246 798 1489 423z" fill="url(#bodyTop)" />
      <ellipse cx="1246" cy="372" rx="259" ry="147" fill="url(#discTop)" stroke="#fff" strokeWidth="1.500" />
      <g stroke="#fff" fill="none">
        <path d="M1003 423L1246 798 1489 423" strokeOpacity="0.800" strokeWidth="1.500" />
        <path d="M1135 239L1246 798M1476 305L1246 798" strokeOpacity="0.500" />
        <path d="M1358 505L1246 798" strokeWidth="1.500" />
      </g>

      {/* lower nappe */}
      <path d="M1246 798L1003 1172 1246 1260 1489 1172z" fill="url(#bodyLow)" />
      <ellipse cx="1246" cy="1223" rx="259" ry="147" fill="url(#disc)" />
      <g stroke="#fff" fill="none" strokeWidth="1.500">
        <path d="M1003 1172A259 147 0 1 0 1489 1172" />
        <path d="M1003 1172A259 147 0 0 1 1489 1172" strokeOpacity="0.500" />
        <path d="M1003 1172L1246 798 1489 1172" strokeOpacity="0.700" />
      </g>
      <ellipse rx="240" ry="103" transform="translate(1170 1107) rotate(-50.600)" fill="url(#cut)" stroke="#fff" strokeWidth="1.500" />
      <g fill="none">
        <path d="M1014 1157A259 147 0 0 1 1311 1081" stroke="#d3d480" strokeWidth="1.500" />
        <path d="M1188 951L1134 1090" stroke="#c4c573" />
        <path d="M1246 798L1188 951" stroke="#d8d8d8" />
        <path d="M1246 798L1012 1287M1246 798L1357 1357" stroke="#fff" strokeWidth="1.500" />
      </g>

      {/* UCS icon */}
      <g strokeWidth="11" strokeLinecap="round">
        <path d="M1252 1222L1331 1200" stroke="#4f9246" />
        <path d="M1252 1221L1331 1199" stroke="#6aae5c" strokeWidth="4" />
        <path d="M1246 1148v74" stroke="#3c5890" />
        <path d="M1246 1146v2" stroke="#6d9be0" strokeWidth="8" />
        <path d="M1246 1225L1286 1272" stroke="#a34440" />
        <path d="M1247 1225L1286 1270" stroke="#c35b56" strokeWidth="4" />
      </g>
      <g className="font-['Lato'] text-[34px] font-light" textAnchor="middle">
        <text x="1254" y="1137" fill="#3f6cb4">Z</text>
        <text x="1339" y="1192" fill="#5c9a4c">Y</text>
        <text x="1294" y="1266" fill="#c0504c">X</text>
      </g>

      {/* cursor */}
      <g fill="none" strokeWidth="1.500">
        <path d="M2366 498v131" stroke="#5a56b8" />
        <path d="M2320 598l56-14" stroke="#5f9a5a" />
        <path d="M2346 559l30 37" stroke="#9c5a58" />
        <path d="M2361 580h11v11h-11z" stroke="#e8e8e8" />
      </g>
    </svg>
  );
}

function ViewCube() {
  return (
    <div className="absolute top-[80px] right-[15px] flex w-[290px] flex-col items-center">
      <svg viewBox="2070 230 290 240" className="h-[240px] w-[290px] overflow-visible" aria-label="View cube">
        <ellipse cx="2215" cy="368" rx="114" ry="70" fill="none" stroke="#494d54" strokeWidth="30" />
        <g fill="#b4b6b9" className="font-['Liberation_Sans'] font-bold" textAnchor="middle">
          <text transform="matrix(.62 .72 -.95 .35 2302 333)" className="text-[34px]">N</text>
          <text transform="matrix(.62 .72 -.95 .35 2090 396)" className="text-[36px]">S</text>
          <text transform="matrix(.62 .72 -.95 .35 2258 439)" className="text-[44px]">E</text>
        </g>
        <g stroke="#77797c" strokeWidth="1">
          <path d="M2151 263l86-21 46 44-93 25z" fill="url(#cubeTop)" />
          <path d="M2151 263l39 48 2 81-37-52z" fill="#8f9193" />
          <path d="M2190 311l93-25-4 79-87 27z" fill="url(#cubeSide)" />
        </g>
        <path d="M2183 302l14-4 11 8v14l-18 5-7-8z" fill="#9aa3ab" fillOpacity="0.600" />
        <g fill="#4c4e51" className="font-['Liberation_Sans'] font-bold" textAnchor="middle">
          <text transform="matrix(.72 .69 -.95 .25 2209 277)" className="text-[19px]">TOP</text>
          <text transform="matrix(.54 .88 0 1 2171 332)" className="text-[16px]">FRONT</text>
          <text transform="matrix(1 -.27 0 1 2237 349)" className="text-[20px]">RIGHT</text>
        </g>
      </svg>
      <button type="button" className="mt-[22px] flex h-6 w-[100px] items-center justify-between rounded-md bg-[#6b747c] px-[9px] text-[20px] leading-6 text-[#22282f]">
        WCS
        <svg viewBox="0 0 18 12" className="h-3 w-[18px]" aria-hidden="true">
          <path d="M1 1h16L9 11z" fill="none" stroke="#22282f" strokeWidth="1.500" />
        </svg>
      </button>
    </div>
  );
}

function CommandLine() {
  return (
    <div className="absolute bottom-0 left-[603px] w-[1000px] font-['Noto_Sans',sans-serif] text-[19px] text-[#b4b8be]">
      <div className="ml-20 flex h-[78px] justify-between bg-[#3c4452] pt-[18px] pr-[11px] pl-[10px]">
        <div className="leading-[30px]">
          <p>Command:</p>
          <p>Command:</p>
        </div>
        <span className="mt-4 h-10 w-2 rounded-full bg-[#94989e]" />
      </div>
      <div className="flex h-[50px] items-center bg-[#3c4452] pr-5">
        <button type="button" aria-label="Recent commands" className="flex w-[90px] items-center gap-2 pb-1 pl-[18px] font-['DejaVu_Sans',sans-serif] text-[20px]">
          <span>&gt;_</span>
          <Caret className="mt-1 text-[#b4b8be]" />
        </button>
        <input aria-label="Command" placeholder="Type a command" className="min-w-0 flex-1 bg-transparent text-[23px] italic outline-none placeholder:text-[#9a9ea8]" />
        <Caret className="mr-6 text-[#94989e]" />
        <Icon name="share" className="size-[26px]" />
      </div>
    </div>
  );
}

function Viewport() {
  return (
    <main className="flex min-w-0 flex-1 flex-col">
      <div className="flex h-11 shrink-0 bg-[#3c4454]">
        <button type="button" aria-label="Tabs overview" className="flex w-12 items-center justify-center border-r-2 border-[#222a33]">
          <Icon name="tiles" className="size-[30px]" />
        </button>
        <button type="button" aria-label="New tab" className="flex w-[46px] items-center justify-center border-r-2 border-[#222a33]">
          <Icon name="plus" />
        </button>
        <button type="button" className="w-[258px] border-r-2 border-[#222a33] bg-[#4f596d] pb-[2px] pl-[6px] text-left text-[22px] font-semibold text-white">
          conicas*
        </button>
      </div>
      <div className="relative min-h-0 flex-1 overflow-hidden bg-[#212830]">
        <Drawing />
        <div className="relative flex h-[50px] w-fit items-center pl-[28px] font-['DejaVu_Sans',sans-serif] text-[22px] text-[#9b9da0]">
          <button type="button" className="w-[39px] text-left">+</button>
          <button type="button" className="h-7 border-l-2 border-[#9b9da0] pr-4 pl-[12px] leading-7">Custom View</button>
          <button type="button" className="h-7 border-l-2 border-[#9b9da0] pl-[12px] leading-7">X-Ray</button>
        </div>
        <ViewCube />
        <CommandLine />
      </div>
    </main>
  );
}

/* ---------- right panel ---------- */

const LAYER_TOOLS = ["layMake", "layMatch", "layPrev", "layIso", "layUniso", "layFreeze", "layOff", "layLock", "layUnlock"];

const LAYERS = [
  { name: "0", swatch: "bg-white", dot: "bg-[#dcdcdc] border-[#dcdcdc]" },
  { name: "circulo", swatch: "bg-[#ea4025]", dot: "border-[#69728a]" },
  { name: "conicas", swatch: "bg-white", dot: "bg-[#dcdcdc] border-[#dcdcdc]" },
  { name: "elipse", swatch: "bg-[#fffb4f]", dot: "border-[#b4b9c2]" },
  { name: "hiperb...", swatch: "bg-[#6df8fd]", dot: "border-[#69728a]" },
  { name: "janelas", swatch: "bg-black", dot: "bg-[#dcdcdc] border-[#dcdcdc]", current: true },
  { name: "parab...", swatch: "bg-[#68f545]", dot: "border-[#69728a]" },
];

function Select({ id, label, value, className, selectClass, disabled, caretClass, children }) {
  return (
    <div className={clsx("relative rounded-sm border-2", className)}>
      <select
        id={id}
        aria-label={label}
        disabled={disabled}
        defaultValue={value}
        className={clsx("size-full appearance-none bg-transparent outline-none", selectClass)}
      >
        <option>{value}</option>
      </select>
      {children}
      <Caret className={clsx("pointer-events-none absolute top-1/2 right-2 -translate-y-1/2", caretClass)} />
    </div>
  );
}

const field = "border-[#343d49] bg-[#50596d] text-white";

function LayerTable() {
  return (
    <div className="mt-[5px] mr-5 ml-[21px] flex min-h-0 flex-1 flex-col border-2 border-[#363e4a]">
      <div className="min-h-0 flex-1 overflow-hidden border-b-2 border-[#262d37] bg-[#4f596b]">
        <table className="w-full table-fixed border-collapse text-left text-[22px] text-white">
          <colgroup>
            <col className="w-[63px]" />
            <col className="w-[115px]" />
            <col className="w-[44px]" />
            <col className="w-[43px]" />
            <col className="w-[94px]" />
            <col className="w-[94px]" />
            <col className="w-[42px]" />
          </colgroup>
          <thead>
            <tr className="h-[46px] bg-[#2f3440] [&>th]:border-r-2 [&>th]:border-b-2 [&>th]:border-[#2a2f3a] [&>th]:p-0">
              <th aria-label="Visible"><Icon name="eye" className="ml-[18px] size-6" /></th>
              <th className="relative bg-[#4f5a6e]">
                <div className="flex items-center pl-2 font-semibold text-[#dcdcdc]">
                  <Icon name="contrast" className="size-4" />
                  <span className="ml-[14px]">N...</span>
                  <svg viewBox="0 0 12 18" className="ml-[14px] h-[18px] w-3" aria-hidden="true">
                    <path d="M0 7l6-7 6 7zM0 11h12l-6 7z" fill={W} />
                  </svg>
                </div>
                <svg viewBox="0 0 12 10" className="absolute bottom-0 left-1/2 h-[10px] w-3 -translate-x-1/2" aria-hidden="true">
                  <path d="M0 10q1-6 6-10 5 4 6 10z" fill="#4a90e8" />
                </svg>
              </th>
              <th aria-label="Frozen"><Icon name="snow" className="mx-auto size-5" /></th>
              <th aria-label="Locked"><Icon name="lock" className="mx-auto size-8" /></th>
              <th aria-label="Lineweight"><Icon name="weightCol" className="mx-auto size-[18px]" /></th>
              <th aria-label="Linetype"><Icon name="typeCol" className="mx-auto size-[18px]" /></th>
              <th aria-label="Viewport"><Icon name="vpCol" className="ml-[18px] size-5" /></th>
            </tr>
          </thead>
          <tbody>
            {LAYERS.map((l) => (
              <tr key={l.name} className={clsx("h-[38px] [&>td]:p-0", l.current && "bg-[#919eb0]")}>
                <td><span className={clsx("ml-[28px] block size-4 rounded-full border-2", l.dot)} /></td>
                <td colSpan={3}>
                  <div className="flex items-center gap-[16px]">
                    <span className={clsx("size-[18px] border-2 border-black", l.swatch)} />
                    {l.name}
                  </div>
                </td>
                <td><span className="pl-[14px]">De...</span></td>
                <td><span className="ml-[16px] block h-[2px] w-16 bg-white" /></td>
                <td />
              </tr>
            ))}
          </tbody>
        </table>
      </div>
      <div className="flex h-8 shrink-0 items-center pr-[20px] pl-[2px]">
        <span className="h-[10px] flex-1 rounded-full bg-[#8a909b]" />
      </div>
    </div>
  );
}

function PropRow({ label, id, children }) {
  return (
    <div className="flex h-[38px] items-center">
      <label htmlFor={id} className="w-[234px] text-right text-[#dcdcdc]">{label}</label>
      <div className="ml-5 flex h-full w-[242px] gap-2">{children}</div>
    </div>
  );
}

function SidePanel() {
  return (
    <aside className="flex w-[542px] shrink-0 flex-col border-l-2 border-[#222a33] text-[22px]">
      <div className="flex h-11 shrink-0 [&>*]:border-[#222a33]">
        <button type="button" aria-label="Layers" className="flex w-[103px] items-center justify-center"><Icon name="layInfo" /></button>
        <button type="button" aria-label="Attachments" className="flex w-[105px] items-center justify-center border-x-2 border-b-2 bg-[#2f3440]"><Icon name="attachTab" /></button>
        <button type="button" aria-label="Tool palettes" className="relative flex w-[105px] items-center justify-center border-r-2 border-b-2 bg-[#2f3440] pl-1">
          <Icon name="toolTab" className="size-7" />
          <Badge className="-top-[2px] left-[59px]" />
        </button>
        <span className="flex-1 border-r-2 border-b-2 bg-[#2f3440]" />
        <button type="button" className="w-[46px] border-b-2 pb-1 text-[26px] leading-8 text-[#8f949c]">»</button>
      </div>

      <div className="flex h-9 shrink-0 items-center justify-between pr-[18px] pl-5 text-[23px] font-medium text-white">
        <h2>Layers</h2>
        <button type="button" aria-label="Undock layers"><Icon name="pin" className="size-7" /></button>
      </div>
      <div className="mt-[30px] flex h-8 shrink-0 gap-4 pl-[62px]">
        {LAYER_TOOLS.map((name) => (
          <button key={name} type="button" aria-label={name}><Icon name={name} /></button>
        ))}
      </div>
      <Select label="Current layer" value="janelas" className={clsx("mt-[23px] mr-4 ml-5 h-[50px] shrink-0", field)} selectClass="pl-[160px]">
        <div className="pointer-events-none absolute inset-y-0 left-[18px] flex items-center">
          <span className="size-4 rounded-full bg-[#dcdcdc]" />
          <span className="ml-[10px] flex opacity-25"><Icon name="lock" /></span>
          <span className="ml-2 flex opacity-25"><Icon name="snow" className="size-5" /></span>
          <span className="ml-[14px] size-[18px] bg-black" />
        </div>
      </Select>
      <Select label="Layer state" value="Unsaved Layer State" className={clsx("mt-[7px] mr-[17px] ml-[21px] h-[50px] shrink-0", field)} selectClass="pl-3" />
      <button type="button" className="flex h-[52px] shrink-0 items-center pl-7 text-[#d0d3d8]">
        <svg viewBox="0 0 16 10" className="mr-6 h-[10px] w-4" aria-hidden="true">
          <path d="M1 1l7 8 7-8" fill="none" stroke={W} strokeWidth="2" />
        </svg>
        Hide Layer List
      </button>

      <LayerTable />

      <div className="flex h-[50px] shrink-0 items-center pl-9">
        {["layNew", "layFilter", "folder", "folderFlash"].map((name) => (
          <button key={name} type="button" aria-label={name} className="w-[60px]"><Icon name={name} className="size-7" /></button>
        ))}
        <button type="button" aria-label="Delete layer" className="ml-auto h-[3px] w-4 bg-[#8a909b]" />
        <button type="button" aria-label="Columns" className="mr-[30px] ml-8 flex items-center gap-[6px]">
          <Icon name="columns" className="size-[22px]" />
          <Caret />
        </button>
      </div>
      <label className="mr-[22px] ml-[22px] flex h-10 shrink-0 items-center rounded-lg bg-white pl-[8px]">
        <svg viewBox="0 0 36 24" className="h-6 w-9" aria-hidden="true">
          <g fill="none" stroke="#222" strokeWidth="2.500">
            <circle cx="11" cy="10" r="9" />
            <path d="M17 16l7 7M25 9l5 5 5-5" />
          </g>
        </svg>
        <input aria-label="Search for layer" placeholder="Search for layer" className="ml-[10px] min-w-0 flex-1 bg-transparent text-[25px] outline-none placeholder:text-[#b9bcc0]" />
      </label>

      <section className="mt-[17px] shrink-0 border-t-2 border-[#262e38]">
        <div className="flex h-[34px] items-center pr-[18px] pl-5">
          <h2 className="flex-1 text-[23px] font-medium text-white">Properties</h2>
          <div className="mr-5 flex h-7 border-2 border-[#2a313c] text-[17px] leading-6">
            <button type="button" className="w-[57px] border-r-2 border-[#2a313c] text-[#858b95]">All</button>
            <button type="button" className="w-[60px] bg-[#4f596d] font-medium text-white">My</button>
          </div>
          <button type="button" aria-label="Customize properties"><Icon name="noteEdit" className="size-[30px]" /></button>
          <button type="button" aria-label="Undock properties" className="ml-4"><Icon name="pin" className="size-7" /></button>
        </div>
        <Select label="Selection" value="Model Space" disabled className="mt-[13px] mr-5 ml-5 h-[42px] border-[#383f4c] bg-[#444d5e] text-[#858c99]" selectClass="pl-3 opacity-100" caretClass="text-[#858c99]" />
        <div className="mt-[14px] mb-[21px] flex">
          <div className="flex flex-col gap-2">
            <PropRow label="Color" id="color">
              <Select id="color" value="ByLayer" className={clsx("flex-1", field)} selectClass="pl-[56px]">
                <span className="pointer-events-none absolute top-[8px] left-4 size-[18px] bg-black" />
              </Select>
            </PropRow>
            <PropRow label="Layer" id="layer">
              <Select id="layer" value="janelas" className={clsx("flex-1", field)} selectClass="pl-3" />
            </PropRow>
            <PropRow label="Linetype" id="linetype">
              <Select id="linetype" value="ByLayer" className={clsx("flex-1", field)} selectClass="pl-[106px]">
                <span className="pointer-events-none absolute top-[15px] left-3 h-[2px] w-16 bg-white" />
              </Select>
            </PropRow>
            <PropRow label="Linetype scale" id="scale">
              <input id="scale" defaultValue="1.000" className={clsx("w-full rounded-sm border-2 pl-[6px]", field)} />
            </PropRow>
            <PropRow label="Lineweight" id="weight">
              <Select id="weight" value="ByLayer" className={clsx("flex-1", field)} selectClass="pl-3" />
            </PropRow>
            <PropRow label="Transparency" id="transparency">
              <div className="relative ml-[5px] w-[151px] py-[3px]">
                <input id="transparency" defaultValue="0" className="size-full border-2 border-[#2f3742] border-l-[#5b86c8] bg-[#50596d] pr-1 text-right text-white" />
                <span className="absolute bottom-[6px] left-1/2 h-[10px] w-px bg-[#8a909b]" />
              </div>
              <button type="button" aria-label="Transparency type" className={clsx("flex flex-1 items-center justify-center gap-[14px] rounded-sm border-2 pl-1", field)}>
                <Icon name="checker" className="size-[26px]" />
                <Caret />
              </button>
            </PropRow>
          </div>
          <span className="ml-[14px] h-[101px] w-[10px] rounded-full bg-[#8a909b]" />
        </div>
      </section>
    </aside>
  );
}

/* ---------- status bar ---------- */

const TOGGLES = ["grid", "snap", "ortho", "polar*", "dyn", "weight", "checker*", "cycle*", "otrack*", "osnap*", "annoVis*", "annoAuto", "anno"];

function StatusBar() {
  return (
    <footer className="flex h-12 shrink-0 border-y-2 border-[#222a33] bg-[#3b4352] text-[22px] text-[#a5a9b2]">
      <button type="button" className="w-[120px] border-r-2 border-[#222a33] bg-[#4f596d] pr-1 font-semibold text-white">Model</button>
      <button type="button" aria-label="New layout" className="flex w-[46px] items-center justify-center border-r-2 border-[#222a33]"><Icon name="plus" className="size-7" /></button>
      {["A3", "A4", "Layout2"].map((tab) => (
        <button key={tab} type="button" className="w-[118px] border-r-2 border-[#222a33] pr-[6px]">{tab}</button>
      ))}
      <div className="ml-auto flex items-center">
        <span className="flex h-full w-[250px] items-center border-l-2 border-[#222a33] pl-[14px] whitespace-pre text-[#c0c3c8]">-2.035,  5.767 , 0.000</span>
        {TOGGLES.map((id) => {
          const name = id.replace("*", "");
          const on = id.endsWith("*");
          return (
            <button key={id} type="button" aria-label={name} aria-pressed={on} className={clsx("mx-[2px] flex h-10 w-10 items-center justify-center", on && "bg-[#6488b8]")}>
              <Icon name={name} className="size-[30px]" />
            </button>
          );
        })}
        <button type="button" className="flex w-[52px] items-center gap-2">1:1 <Caret /></button>
        <button type="button" aria-label="Isolate objects" className="flex w-[52px] justify-center"><Icon name="shapes" /></button>
        <button type="button" aria-label="Settings" className="mr-3 w-9 pl-[3px]"><Gear className="size-[30px]" /></button>
      </div>
    </footer>
  );
}

export default function App() {
  return (
    <div className="flex h-screen w-full flex-col overflow-hidden bg-[#2c3229] pr-1 font-['Inter',sans-serif]">
      <div className="flex min-h-0 flex-1 flex-col bg-[#3c4452]">
        <Header />
        <div className="flex min-h-0 flex-1">
          <ToolPalette />
          <div className="flex min-w-0 flex-1 flex-col">
            <div className="flex min-h-0 flex-1">
              <Viewport />
              <SidePanel />
            </div>
            <StatusBar />
          </div>
        </div>
      </div>
      <div className="h-1 shrink-0" />
    </div>
  );
}
